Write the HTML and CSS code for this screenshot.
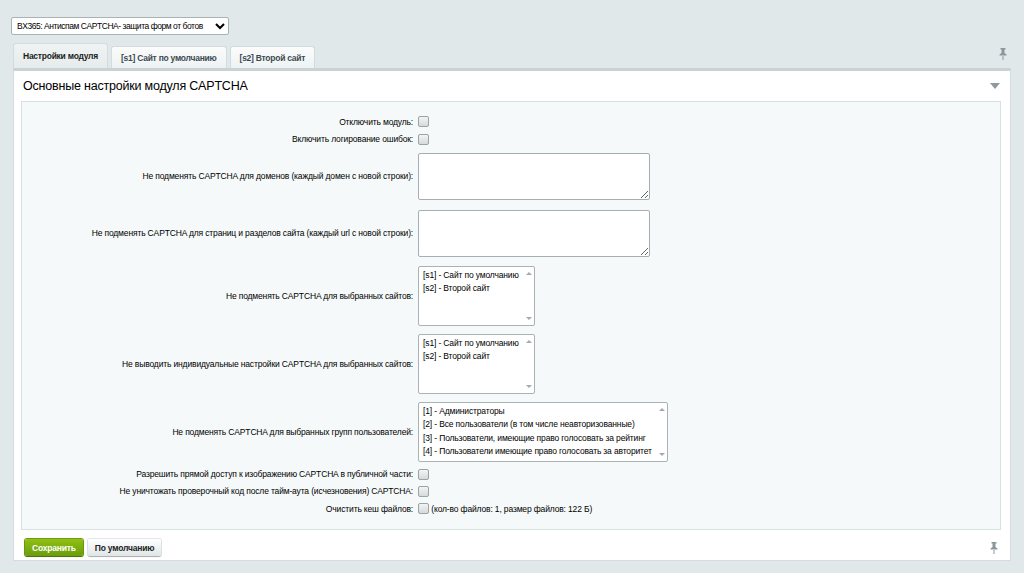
FILE: index.html
```html
<!DOCTYPE html>
<html lang="ru">
<head>
    <meta charset="UTF-8">
    <title>Настройки модуля</title>
    <link rel="stylesheet" href="styles.css">
</head>
<body>
    <div class="page">
        <div class="toolbar">
            <select class="module-select">
                <option>BX365: Антиспам CAPTCHA- защита форм от ботов</option>
            </select>
        </div>

        <div class="tabs">
            <div class="tab active">Настройки модуля</div>
            <div class="tab">[s1] Сайт по умолчанию</div>
            <div class="tab">[s2] Второй сайт</div>
            <span class="pin pin-top">
                <svg width="8" height="12" viewBox="0 0 8 12"><path d="M1.5 0h5v1.5h-1v3.5l2 1.5v1h-7v-1l2-1.5v-3.5h-1z" fill="#8c969b"/><path d="M4 8v4" stroke="#8c969b" stroke-width="1"/></svg>
            </span>
        </div>

        <div class="panel">
            <div class="panel-head">
                <span class="panel-title">Основные настройки модуля CAPTCHA</span>
                <span class="collapse"></span>
            </div>

            <div class="form-box">
                <table class="form">
                    <tr>
                        <td class="lbl">Отключить модуль:</td>
                        <td><input type="checkbox" class="chk"></td>
                    </tr>
                    <tr>
                        <td class="lbl">Включить логирование ошибок:</td>
                        <td><input type="checkbox" class="chk"></td>
                    </tr>
                    <tr>
                        <td class="lbl">Не подменять CAPTCHA для доменов (каждый домен с новой строки):</td>
                        <td><textarea class="area"></textarea></td>
                    </tr>
                    <tr>
                        <td class="lbl">Не подменять CAPTCHA для страниц и разделов сайта (каждый url с новой строки):</td>
                        <td><textarea class="area"></textarea></td>
                    </tr>
                    <tr>
                        <td class="lbl">Не подменять CAPTCHA для выбранных сайтов:</td>
                        <td>
                            <div class="list small">
                                <div class="items">
                                    <div>[s1] - Сайт по умолчанию</div>
                                    <div>[s2] - Второй сайт</div>
                                </div>
                                <div class="scroll"><span class="up"></span><span class="down"></span></div>
                            </div>
                        </td>
                    </tr>
                    <tr>
                        <td class="lbl">Не выводить индивидуальные настройки CAPTCHA для выбранных сайтов:</td>
                        <td>
                            <div class="list small">
                                <div class="items">
                                    <div>[s1] - Сайт по умолчанию</div>
                                    <div>[s2] - Второй сайт</div>
                                </div>
                                <div class="scroll"><span class="up"></span><span class="down"></span></div>
                            </div>
                        </td>
                    </tr>
                    <tr>
                        <td class="lbl">Не подменять CAPTCHA для выбранных групп пользователей:</td>
                        <td>
                            <div class="list wide">
                                <div class="items">
                                    <div>[1] - Администраторы</div>
                                    <div>[2] - Все пользователи (в том числе неавторизованные)</div>
                                    <div>[3] - Пользователи, имеющие право голосовать за рейтинг</div>
                                    <div>[4] - Пользователи имеющие право голосовать за авторитет</div>
                                </div>
                                <div class="scroll"><span class="up"></span><span class="down"></span></div>
                            </div>
                        </td>
                    </tr>
                    <tr>
                        <td class="lbl">Разрешить прямой доступ к изображению CAPTCHA в публичной части:</td>
                        <td><input type="checkbox" class="chk"></td>
                    </tr>
                    <tr>
                        <td class="lbl">Не уничтожать проверочный код после тайм-аута (исчезновения) CAPTCHA:</td>
                        <td><input type="checkbox" class="chk"></td>
                    </tr>
                    <tr>
                        <td class="lbl">Очистить кеш файлов:</td>
                        <td><input type="checkbox" class="chk"> <span class="note">(кол-во файлов: 1, размер файлов: 122 Б)</span></td>
                    </tr>
                </table>
            </div>

            <div class="panel-foot">
                <button class="btn btn-save">Сохранить</button>
                <button class="btn">По умолчанию</button>
                <span class="pin pin-bottom">
                    <svg width="8" height="12" viewBox="0 0 8 12"><path d="M1.5 0h5v1.5h-1v3.5l2 1.5v1h-7v-1l2-1.5v-3.5h-1z" fill="#8c969b"/><path d="M4 8v4" stroke="#8c969b" stroke-width="1"/></svg>
                </span>
            </div>
        </div>
    </div>
</body>
</html>
```

FILE: styles.css
```css
body {
    margin: 0;
    background-color: #e1e8ea;
    font-family: "Liberation Sans", Arial, sans-serif;
    color: #000;
}
.page {
    padding: 0 13px 6px 13px;
}
.toolbar {
    padding: 15px 0 0 0;
    margin-left: -2px;
    height: 27px;
}
.module-select {
    font-family: "Liberation Sans", Arial, sans-serif;
    font-size: 8.5px;
    letter-spacing: -0.45px;
    height: 18px;
    width: 218px;
    padding: 0 1px;
    border: 1px solid #a9b2b5;
    border-radius: 2px;
    background: #fff;
    color: #000;
}
.tabs {
    display: flex;
    align-items: flex-end;
    height: 26px;
}
.tab {
    font-size: 8.5px;
    font-weight: bold;
    letter-spacing: -0.25px;
    color: #3c4a52;
    padding: 0 9px;
    height: 21px;
    line-height: 22px;
    margin-right: 3px;
    background: linear-gradient(#fbfcfc, #eef2f3);
    border: 1px solid #d3dbdd;
    border-bottom: none;
    border-radius: 3px 3px 0 0;
}
.tab.active {
    height: 24px;
    line-height: 24px;
    color: #1a1f22;
    background: linear-gradient(#f0f3f3, #e6ebec);
}
.pin {
    display: inline-block;
    line-height: 0;
}
.pin-top {
    margin-left: auto;
    margin-right: 4px;
    margin-bottom: 8px;
}
.panel {
    background: #fff;
    border: 1px solid #d4dcdf;
    border-top: 3px solid #c9d2d5;
    height: 493px;
    box-sizing: border-box;
    padding: 0 9px 0 7px;
}
.panel-head {
    display: flex;
    align-items: center;
    height: 30px;
    padding-left: 2px;
}
.panel-title {
    font-size: 12.5px;
    letter-spacing: -0.2px;
    color: #000;
}
.collapse {
    margin-left: auto;
    margin-right: 1px;
    width: 0;
    height: 0;
    border-left: 5px solid transparent;
    border-right: 5px solid transparent;
    border-top: 6px solid #8f989c;
}
.form-box {
    background: #f5f9f9;
    border: 1px solid #d7e0e2;
    padding: 11px 0 12px 0;
}
.form {
    width: 100%;
    border-collapse: collapse;
    font-size: 8.5px;
    letter-spacing: -0.15px;
}
.form td {
    padding: 3px 0;
    vertical-align: middle;
}
.form td.lbl {
    width: 40.5%;
    text-align: right;
    padding-right: 5px;
    color: #000;
}
.chk {
    appearance: none;
    -webkit-appearance: none;
    width: 11px;
    height: 11px;
    margin: 0;
    vertical-align: middle;
    border: 1px solid #9aa3a7;
    border-radius: 2px;
    background: linear-gradient(#f3f4f4, #d6dadb);
    box-sizing: border-box;
}
.note {
    vertical-align: middle;
}
.area {
    display: block;
    width: 232px;
    height: 47px;
    margin: 2px 0;
    box-sizing: border-box;
    border: 1px solid #a5aeb2;
    border-radius: 2px;
    background: #fff;
}
.list {
    display: flex;
    height: 60px;
    margin: 1px 0;
    box-sizing: border-box;
    border: 1px solid #a9b2b5;
    border-radius: 2px;
    background: #fff;
}
.list.small {
    width: 117px;
}
.list.wide {
    width: 250px;
}
.items {
    flex: 1;
    padding: 2px 0 0 4px;
    line-height: 13.5px;
    white-space: nowrap;
    overflow: hidden;
}
.scroll {
    width: 11px;
    display: flex;
    flex-direction: column;
    justify-content: space-between;
    align-items: center;
    padding: 5px 0;
}
.up, .down {
    width: 0;
    height: 0;
    border-left: 3px solid transparent;
    border-right: 3px solid transparent;
}
.up {
    border-bottom: 3px solid #a3a9ac;
}
.down {
    border-top: 3px solid #a3a9ac;
}
.panel-foot {
    display: flex;
    align-items: center;
    padding: 9px 0 0 4px;
}
.btn {
    font-family: "Liberation Sans", Arial, sans-serif;
    font-size: 8.5px;
    font-weight: bold;
    letter-spacing: -0.2px;
    height: 17px;
    padding: 0 7px;
    margin-right: 5px;
    border: none;
    border-radius: 2px;
    color: #222;
    background: linear-gradient(#ffffff, #dfe5e7);
    box-shadow: 0 1px 1px rgba(0, 0, 0, 0.25), 0 0 0 1px #e1e6e8;
}
.btn-save {
    color: #fff;
    padding: 0 7px;
    background: linear-gradient(#8fc113, #6b9c0c);
    box-shadow: 0 1px 1px rgba(0, 0, 0, 0.3), 0 0 0 1px #6e9a10;
}
.pin-bottom {
    margin-left: auto;
    margin-right: 3px;
}
```
